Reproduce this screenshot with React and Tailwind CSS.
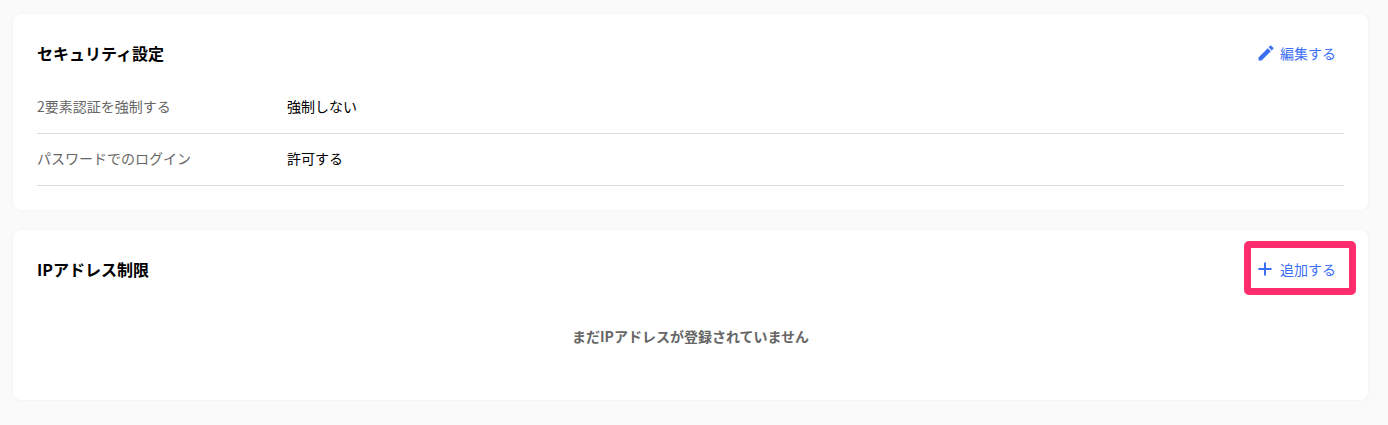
import { Plus } from 'lucide-react';

const settings = [
  { label: '2要素認証を強制する', value: '強制しない' },
  { label: 'パスワードでのログイン', value: '許可する' },
];

function ActionButton({ icon, children }) {
  return (
    <button className="flex h-10 items-center gap-1 px-2 text-sm text-[#3d6ff5]">
      {icon}
      <span>{children}</span>
    </button>
  );
}

function PencilIcon() {
  return (
    <svg className="h-5 w-5" viewBox="0 0 24 24" fill="currentColor">
      <path d="M3 17.25V21h3.75L17.81 9.94l-3.75-3.75L3 17.25zM20.71 7.04a1 1 0 0 0 0-1.41l-2.34-2.34a1 1 0 0 0-1.41 0l-1.83 1.83 3.75 3.75 1.83-1.83z" />
    </svg>
  );
}

export default function App() {
  return (
    <div className="min-h-[425px] bg-[#fafafa] px-[13px] pt-[14px] font-['Noto_Sans_CJK_JP',sans-serif] text-black">
      {/* Security settings */}
      <section className="h-[196px] w-[1355px] rounded-lg bg-white px-6 shadow-[0_0_3px_rgba(0,0,0,0.06)]">
        <div className="flex items-center justify-between pt-[19px] pb-[9px]">
          <h2 className="text-base font-bold">セキュリティ設定</h2>
          <ActionButton icon={<PencilIcon />}>編集する</ActionButton>
        </div>
        {settings.map((row) => (
          <div key={row.label} className="flex h-[52px] items-center border-b border-[#dcdcdc] pb-1 text-sm">
            <span className="w-[250px] text-[#666666]">{row.label}</span>
            <span>{row.value}</span>
          </div>
        ))}
      </section>

      {/* IP address restriction */}
      <section className="mt-5 h-[170px] w-[1355px] rounded-lg bg-white px-6 shadow-[0_0_3px_rgba(0,0,0,0.06)]">
        <div className="flex items-center justify-between pt-[19px] pb-[9px]">
          <h2 className="text-base font-bold">IPアドレス制限</h2>
          <div className="relative">
            <ActionButton icon={<Plus className="-ml-px mr-px h-5 w-5" strokeWidth={2.4} />}>追加する</ActionButton>
            <div className="absolute -left-1 -top-2 h-[54px] w-[112px] rounded-[5px] border-[7px] border-[#ff2d6b]" />
          </div>
        </div>
        <p className="pt-7 text-center text-sm font-bold text-[#666666]">まだIPアドレスが登録されていません</p>
      </section>
    </div>
  );
}
